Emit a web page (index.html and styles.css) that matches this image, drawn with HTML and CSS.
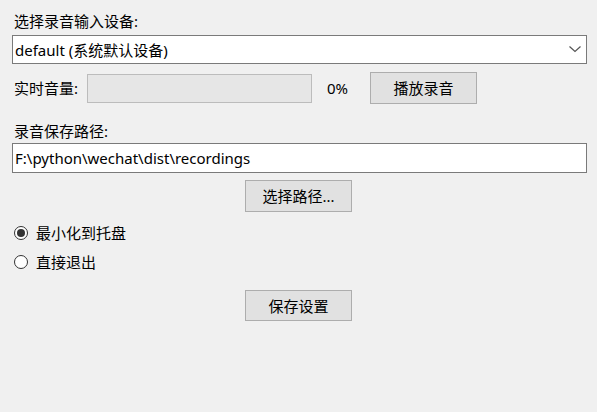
FILE: index.html
```html
<!DOCTYPE html>
<html lang="zh-CN">
<head>
<meta charset="utf-8">
<title>设置</title>
<link rel="stylesheet" href="styles.css">
</head>
<body>
<div class="panel">
  <div class="label first">选择录音输入设备:</div>
  <div class="combo">
    <span class="combo-text">default (系统默认设备)</span>
    <svg class="chevron" width="12" height="7" viewBox="0 0 12 7"><polyline points="0.5,0.5 6,5.5 11.5,0.5" fill="none" stroke="#555" stroke-width="1.2"/></svg>
  </div>
  <div class="level-row">
    <span class="level-label">实时音量:</span>
    <div class="progress"></div>
    <span class="percent">0%</span>
    <div class="btn">播放录音</div>
  </div>
  <div class="label second">录音保存路径:</div>
  <div class="textbox">F:\python\wechat\dist\recordings</div>
  <div class="btn-row choose"><div class="btn">选择路径...</div></div>
  <div class="radio-row r1"><span class="radio checked"></span><span>最小化到托盘</span></div>
  <div class="radio-row r2"><span class="radio"></span><span>直接退出</span></div>
  <div class="btn-row save"><div class="btn">保存设置</div></div>
</div>
</body>
</html>
```
FILE: styles.css
```css
html, body {
  margin: 0;
  padding: 0;
  background: #f0f0f0;
}
body {
  width: 597px;
  height: 412px;
  overflow: hidden;
  font-family: "Noto Sans", "Noto Sans CJK SC", sans-serif;
  font-size: 15px;
  color: #000;
}
.panel {
  display: flex;
  flex-direction: column;
  padding: 11px 10px 0 12px;
}
.label {
  line-height: 20px;
  height: 20px;
  padding-left: 2px;
}
.combo {
  margin-top: 4px;
  height: 29px;
  box-sizing: border-box;
  border: 1px solid #7a7a7a;
  background: #fff;
  display: flex;
  align-items: center;
  justify-content: space-between;
  padding: 0 5px 0 2px;
  line-height: 20px;
}
.chevron { display: block; }
.level-row {
  margin-top: 8px;
  height: 32px;
  display: flex;
  align-items: center;
}
.level-label {
  padding-left: 2px;
  width: 73px;
  line-height: 20px;
}
.progress {
  width: 225px;
  height: 29px;
  box-sizing: border-box;
  border: 1px solid #bcbcbc;
  background: #e6e6e6;
}
.percent {
  margin-left: 15px;
  width: 43px;
  line-height: 20px;
}
.btn {
  width: 107px;
  height: 32px;
  box-sizing: border-box;
  border: 1px solid #adadad;
  background: #e1e1e1;
  display: flex;
  align-items: center;
  justify-content: center;
  line-height: 20px;
}
.label.second { margin-top: 17px; }
.textbox {
  margin-top: 2px;
  height: 30px;
  box-sizing: border-box;
  border: 1px solid #7a7a7a;
  background: #fff;
  padding-left: 2px;
  display: flex;
  align-items: center;
  line-height: 20px;
}
.btn-row {
  display: flex;
  justify-content: flex-start;
  padding-left: 233px;
}
.choose { margin-top: 7px; }
.save { margin-top: 18px; }
.save .btn { height: 31px; }
.radio-row {
  display: flex;
  align-items: center;
  height: 20px;
  line-height: 20px;
  padding-left: 2px;
}
.r1 { margin-top: 11px; }
.r2 { margin-top: 9px; }
.radio {
  width: 14px;
  height: 14px;
  box-sizing: border-box;
  border: 1px solid #333;
  border-radius: 50%;
  background: #fff;
  margin-right: 8px;
  position: relative;
  display: inline-block;
}
.radio.checked::after {
  content: "";
  position: absolute;
  left: 2px;
  top: 2px;
  width: 8px;
  height: 8px;
  border-radius: 50%;
  background: #333;
}
```
